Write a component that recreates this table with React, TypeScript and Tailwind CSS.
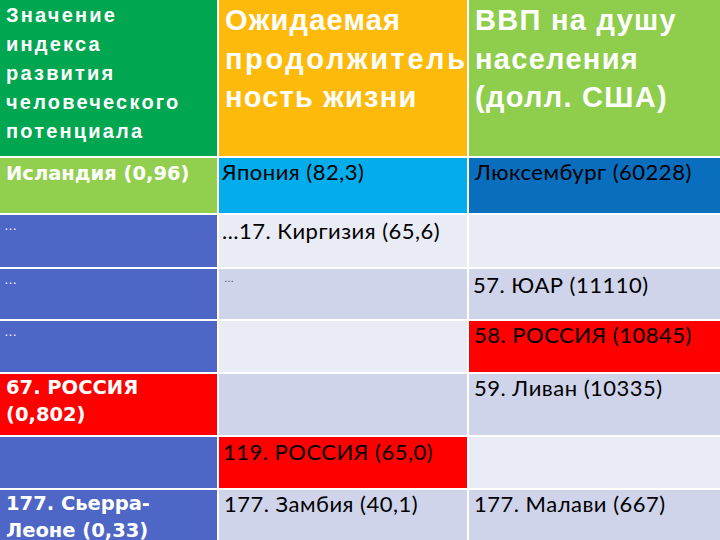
import React from "react";

const body = "font-['Lato','Open_Sans',sans-serif] text-[22px] leading-[28px] tracking-[0.5px] text-black";
const c1 = "font-['DejaVu_Sans','Liberation_Sans',sans-serif] font-bold text-white text-[19.5px] leading-[27px]";
const dots = "bg-[#4E66C6] pl-[4px] pt-[1px] text-white text-[13px] leading-[20px] font-['Liberation_Sans',sans-serif]";

export default function App() {
  return (
    <div className="w-[720px] h-[540px] overflow-hidden bg-white">
      <div className="grid grid-cols-[217px_248px_251px] grid-rows-[156px_55px_52px_50px_51px_61px_51px_52px] gap-x-[2px] gap-y-[2px]">
        {/* header */}
        <div className="bg-[#00A650] pl-[6px] pt-[1px] font-['Liberation_Sans',sans-serif] font-bold text-white text-[20px] leading-[29px] tracking-[2.2px]">
          Значение<br />индекса<br />развития<br />человеческого<br />потенциала
        </div>
        <div className="bg-[#FDBA0B] pl-[6px] pt-[1px] font-['Liberation_Sans',sans-serif] font-bold text-white text-[29px] leading-[38.5px] tracking-[1.2px]">
          Ожидаемая<br /><span className="tracking-[2.6px]">продолжитель</span><br />ность жизни
        </div>
        <div className="bg-[#8FCD4C] pl-[6px] pt-[1px] font-['Liberation_Sans',sans-serif] font-bold text-white text-[29px] leading-[38.5px] tracking-[1.3px]">
          ВВП на душу<br />населения<br />(долл. США)
        </div>

        {/* row 1 */}
        <div className={`bg-[#92CF4F] pl-[6px] pt-[2px] ${c1}`}>Исландия (0,96)</div>
        <div className={`bg-[#03ACEA] pl-[3px] pt-0 ${body} text-[#14245a]`}>Япония (82,3)</div>
        <div className={`bg-[#0A6EBF] pl-[6px] pt-0 ${body} text-[#0d1a3a]`}>Люксембург (60228)</div>

        {/* row 2 */}
        <div className={dots}>…</div>
        <div className={`bg-[#E9EBF5] pl-[3px] pt-[2px] ${body}`}>…17. Киргизия (65,6)</div>
        <div className="bg-[#E9EBF5]" />

        {/* row 3 */}
        <div className={dots}>…</div>
        <div className="bg-[#CFD4EA] pl-[5px] pt-[2px] text-[#444] text-[10px] leading-[16px] font-['Liberation_Sans',sans-serif]">…</div>
        <div className={`bg-[#CFD4EA] pl-[4px] pt-[2px] ${body}`}>57. ЮАР (11110)</div>

        {/* row 4 */}
        <div className={dots}>…</div>
        <div className="bg-[#E9EBF5]" />
        <div className={`bg-[#FF0000] pl-[5px] pt-0 ${body} text-[#3a0000]`}>58. РОССИЯ (10845)</div>

        {/* row 5 */}
        <div className={`bg-[#FF0000] pl-[6px] pt-0 ${c1}`}>67. РОССИЯ<br />(0,802)</div>
        <div className="bg-[#CFD4EA]" />
        <div className={`bg-[#CFD4EA] pl-[5px] pt-0 ${body}`}>59. Ливан (10335)</div>

        {/* row 6 */}
        <div className="bg-[#4E66C6]" />
        <div className={`bg-[#FF0000] pl-[4px] pt-[1px] ${body} text-[#2a0000]`}>119. РОССИЯ (65,0)</div>
        <div className="bg-[#E9EBF5]" />

        {/* row 7 */}
        <div className={`bg-[#4E66C6] pl-[6px] pt-0 ${c1}`}>177. Сьерра-<br />Леоне (0,33)</div>
        <div className={`bg-[#CFD4EA] pl-[5px] pt-0 ${body}`}>177. Замбия (40,1)</div>
        <div className={`bg-[#CFD4EA] pl-[5px] pt-0 ${body}`}>177. Малави (667)</div>
      </div>
    </div>
  );
}
